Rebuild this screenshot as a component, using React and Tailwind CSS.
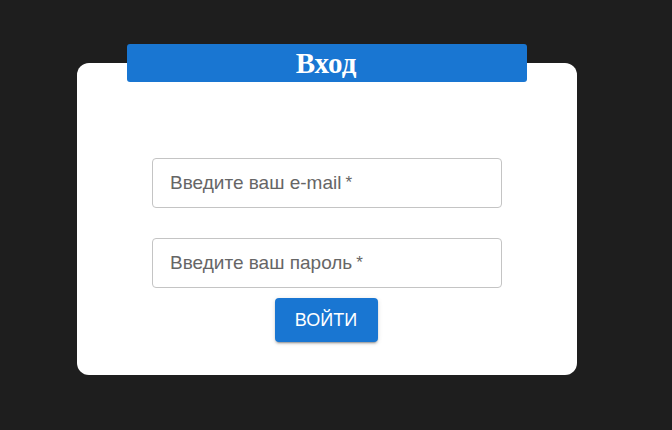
export default function App() {
  return (
    <div className="min-h-[430px] w-full bg-[#1e1e1e] pt-[63px] pl-[77px]" style={{ fontFamily: '"Liberation Sans", Arial, sans-serif' }}>
      <div className="w-[500px] h-[312px] bg-white rounded-[12px] flex flex-col items-center">
        <div className="-mt-[19px] w-[400px] h-[38px] bg-[#1976d2] rounded-[3px] flex items-center justify-center">
          <span className="text-white font-bold text-[29px] leading-none -ml-[2px]" style={{ fontFamily: '"Liberation Serif", "Times New Roman", serif' }}>Вход</span>
        </div>
        <div className="mt-[76px] w-[350px] h-[50px] border border-[#c4c4c4] rounded-[4px] flex items-center pl-[17px] text-[19px] text-[#666666]">
          Введите ваш e-mail<span className="ml-[4px] text-[17px]">*</span>
        </div>
        <div className="mt-[30px] w-[350px] h-[50px] border border-[#c4c4c4] rounded-[4px] flex items-center pl-[17px] text-[19px] text-[#666666]">
          Введите ваш пароль<span className="ml-[4px] text-[17px]">*</span>
        </div>
        <button className="mt-[10px] -ml-[2px] w-[103px] h-[44px] bg-[#1976d2] text-white text-[18px] rounded-[4px] shadow-[0_3px_1px_-2px_rgba(0,0,0,0.2),0_2px_2px_0_rgba(0,0,0,0.14),0_1px_5px_0_rgba(0,0,0,0.12)]">
          ВОЙТИ
        </button>
      </div>
    </div>
  );
}
